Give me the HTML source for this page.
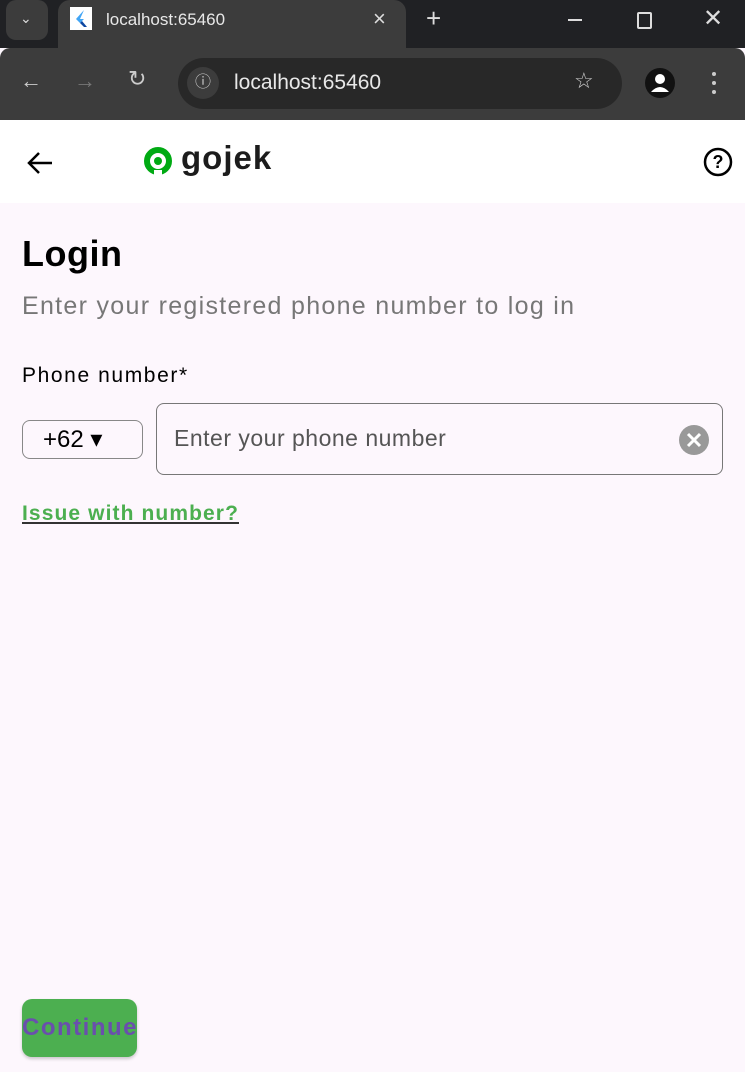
<!DOCTYPE html>
<html><head><style>
body{margin:0;width:745px;height:1072px;overflow:hidden;font-family:"Liberation Sans",sans-serif;background:#fdf7fd;position:relative}
.abs{position:absolute}
</style></head><body>
<div class="abs" style="left:0;top:0;width:745px;height:48px;background:#202124"></div>
<div class="abs" style="left:6px;top:0;width:42px;height:40px;background:#3c3c3c;border-radius:10px"></div>
<div class="abs" style="left:20px;top:10px;color:#ddd;font-size:14px">⌄</div>
<div class="abs" style="left:58px;top:0;width:348px;height:48px;background:#3c3c3c;border-radius:12px 12px 0 0"></div>
<div class="abs" style="left:70px;top:7px;width:22px;height:23px;background:#fff"><svg width="22" height="23"><path d="M14 3 L6 12 L10 16 L14 12 L10 12Z" fill="#42a5f5"/><path d="M10 16 L14 20 L17 20 L12 14Z" fill="#0d47a1"/></svg></div>
<div class="abs" style="left:106px;top:10px;color:#e8e8e8;font-size:17px">localhost:65460</div>
<div class="abs" style="left:373px;top:6px;color:#ddd;font-size:22px">×</div>
<div class="abs" style="left:426px;top:3px;color:#ddd;font-size:26px">+</div>
<div class="abs" style="left:568px;top:19px;width:14px;height:2px;background:#ddd"></div>
<div class="abs" style="left:637px;top:12px;width:11px;height:13px;border:2px solid #ddd;border-radius:2px"></div>
<div class="abs" style="left:703px;top:4px;color:#ddd;font-size:24px">✕</div>
<div class="abs" style="left:0;top:48px;width:745px;height:72px;background:#3c3c3c;border-radius:10px 10px 0 0"></div>
<div class="abs" style="left:20px;top:68px;color:#ccc;font-size:22px">←</div>
<div class="abs" style="left:74px;top:68px;color:#777;font-size:22px">→</div>
<div class="abs" style="left:128px;top:66px;color:#ccc;font-size:22px">↻</div>
<div class="abs" style="left:178px;top:58px;width:444px;height:51px;background:#282828;border-radius:26px"></div>
<div class="abs" style="left:187px;top:67px;width:32px;height:32px;background:#3c3c3c;border-radius:50%;color:#ccc;text-align:center;line-height:32px;font-size:16px">ⓘ</div>
<div class="abs" style="left:234px;top:71px;color:#e8e8e8;font-size:21px">localhost:65460</div>
<div class="abs" style="left:574px;top:68px;color:#ccc;font-size:22px">☆</div>
<div class="abs" style="left:645px;top:68px;width:30px;height:30px;background:#111;border-radius:50%"><svg width="30" height="30"><circle cx="15" cy="11" r="5" fill="#fff"/><path d="M6 24 Q15 14 24 24Z" fill="#fff"/></svg></div>
<div class="abs" style="left:712px;top:72px;width:4px;height:4px;background:#ccc;border-radius:50%;box-shadow:0 9px #ccc,0 18px #ccc"></div>
<div class="abs" style="left:0;top:120px;width:745px;height:83px;background:#fff"></div>
<svg class="abs" style="left:26px;top:150px" width="28" height="26"><path d="M26 13H3M13 3L3 13L13 23" stroke="#000" stroke-width="2.5" fill="none"/></svg>
<svg class="abs" style="left:143px;top:146px" width="32" height="32"><circle cx="15" cy="15" r="11" fill="none" stroke="#00aa13" stroke-width="6"/><circle cx="15" cy="15" r="4" fill="#00aa13"/><rect x="11" y="24" width="8" height="6" fill="#fff"/></svg>
<div class="abs" style="left:181px;top:139px;font-size:33px;font-weight:bold;color:#1c1c1c;letter-spacing:1px">gojek</div>
<svg class="abs" style="left:703px;top:147px" width="30" height="30"><circle cx="15" cy="15" r="13" stroke="#000" stroke-width="2.5" fill="none"/><text x="15" y="21" text-anchor="middle" font-size="18" font-weight="bold" font-family="Liberation Sans">?</text></svg>
<div class="abs" style="left:22px;top:233px;font-size:36px;font-weight:bold;letter-spacing:0.5px">Login</div>
<div class="abs" style="left:22px;top:292px;font-size:25px;color:#777;letter-spacing:1.3px">Enter your registered phone number to log in</div>
<div class="abs" style="left:22px;top:364px;font-size:21px;letter-spacing:1.6px">Phone number*</div>
<div class="abs" style="left:22px;top:420px;width:119px;height:37px;border:1px solid #888;border-radius:8px;font-size:24px;line-height:37px;box-sizing:content-box"><span style="margin-left:20px">+62 ▾</span></div>
<div class="abs" style="left:156px;top:403px;width:565px;height:70px;border:1.5px solid #777;border-radius:8px"></div>
<div class="abs" style="left:174px;top:425px;font-size:23px;color:#555;letter-spacing:0.5px">Enter your phone number</div>
<svg class="abs" style="left:679px;top:425px" width="30" height="30"><circle cx="15" cy="15" r="15" fill="#999"/><path d="M9 9L21 21M21 9L9 21" stroke="#fff" stroke-width="3"/></svg>
<div class="abs" style="left:22px;top:502px;font-size:21px;font-weight:bold;color:#4caf50;text-decoration:underline;text-decoration-color:#333;letter-spacing:1.1px">Issue with number?</div>
<div class="abs" style="left:22px;top:999px;width:115px;height:58px;background:#4caf50;border-radius:10px;box-shadow:0 2px 3px rgba(0,0,0,.2)"></div>
<div class="abs" style="left:22px;top:1014px;font-size:24px;font-weight:bold;color:#6a4fad;letter-spacing:1.5px">Continue</div>
</body></html>
